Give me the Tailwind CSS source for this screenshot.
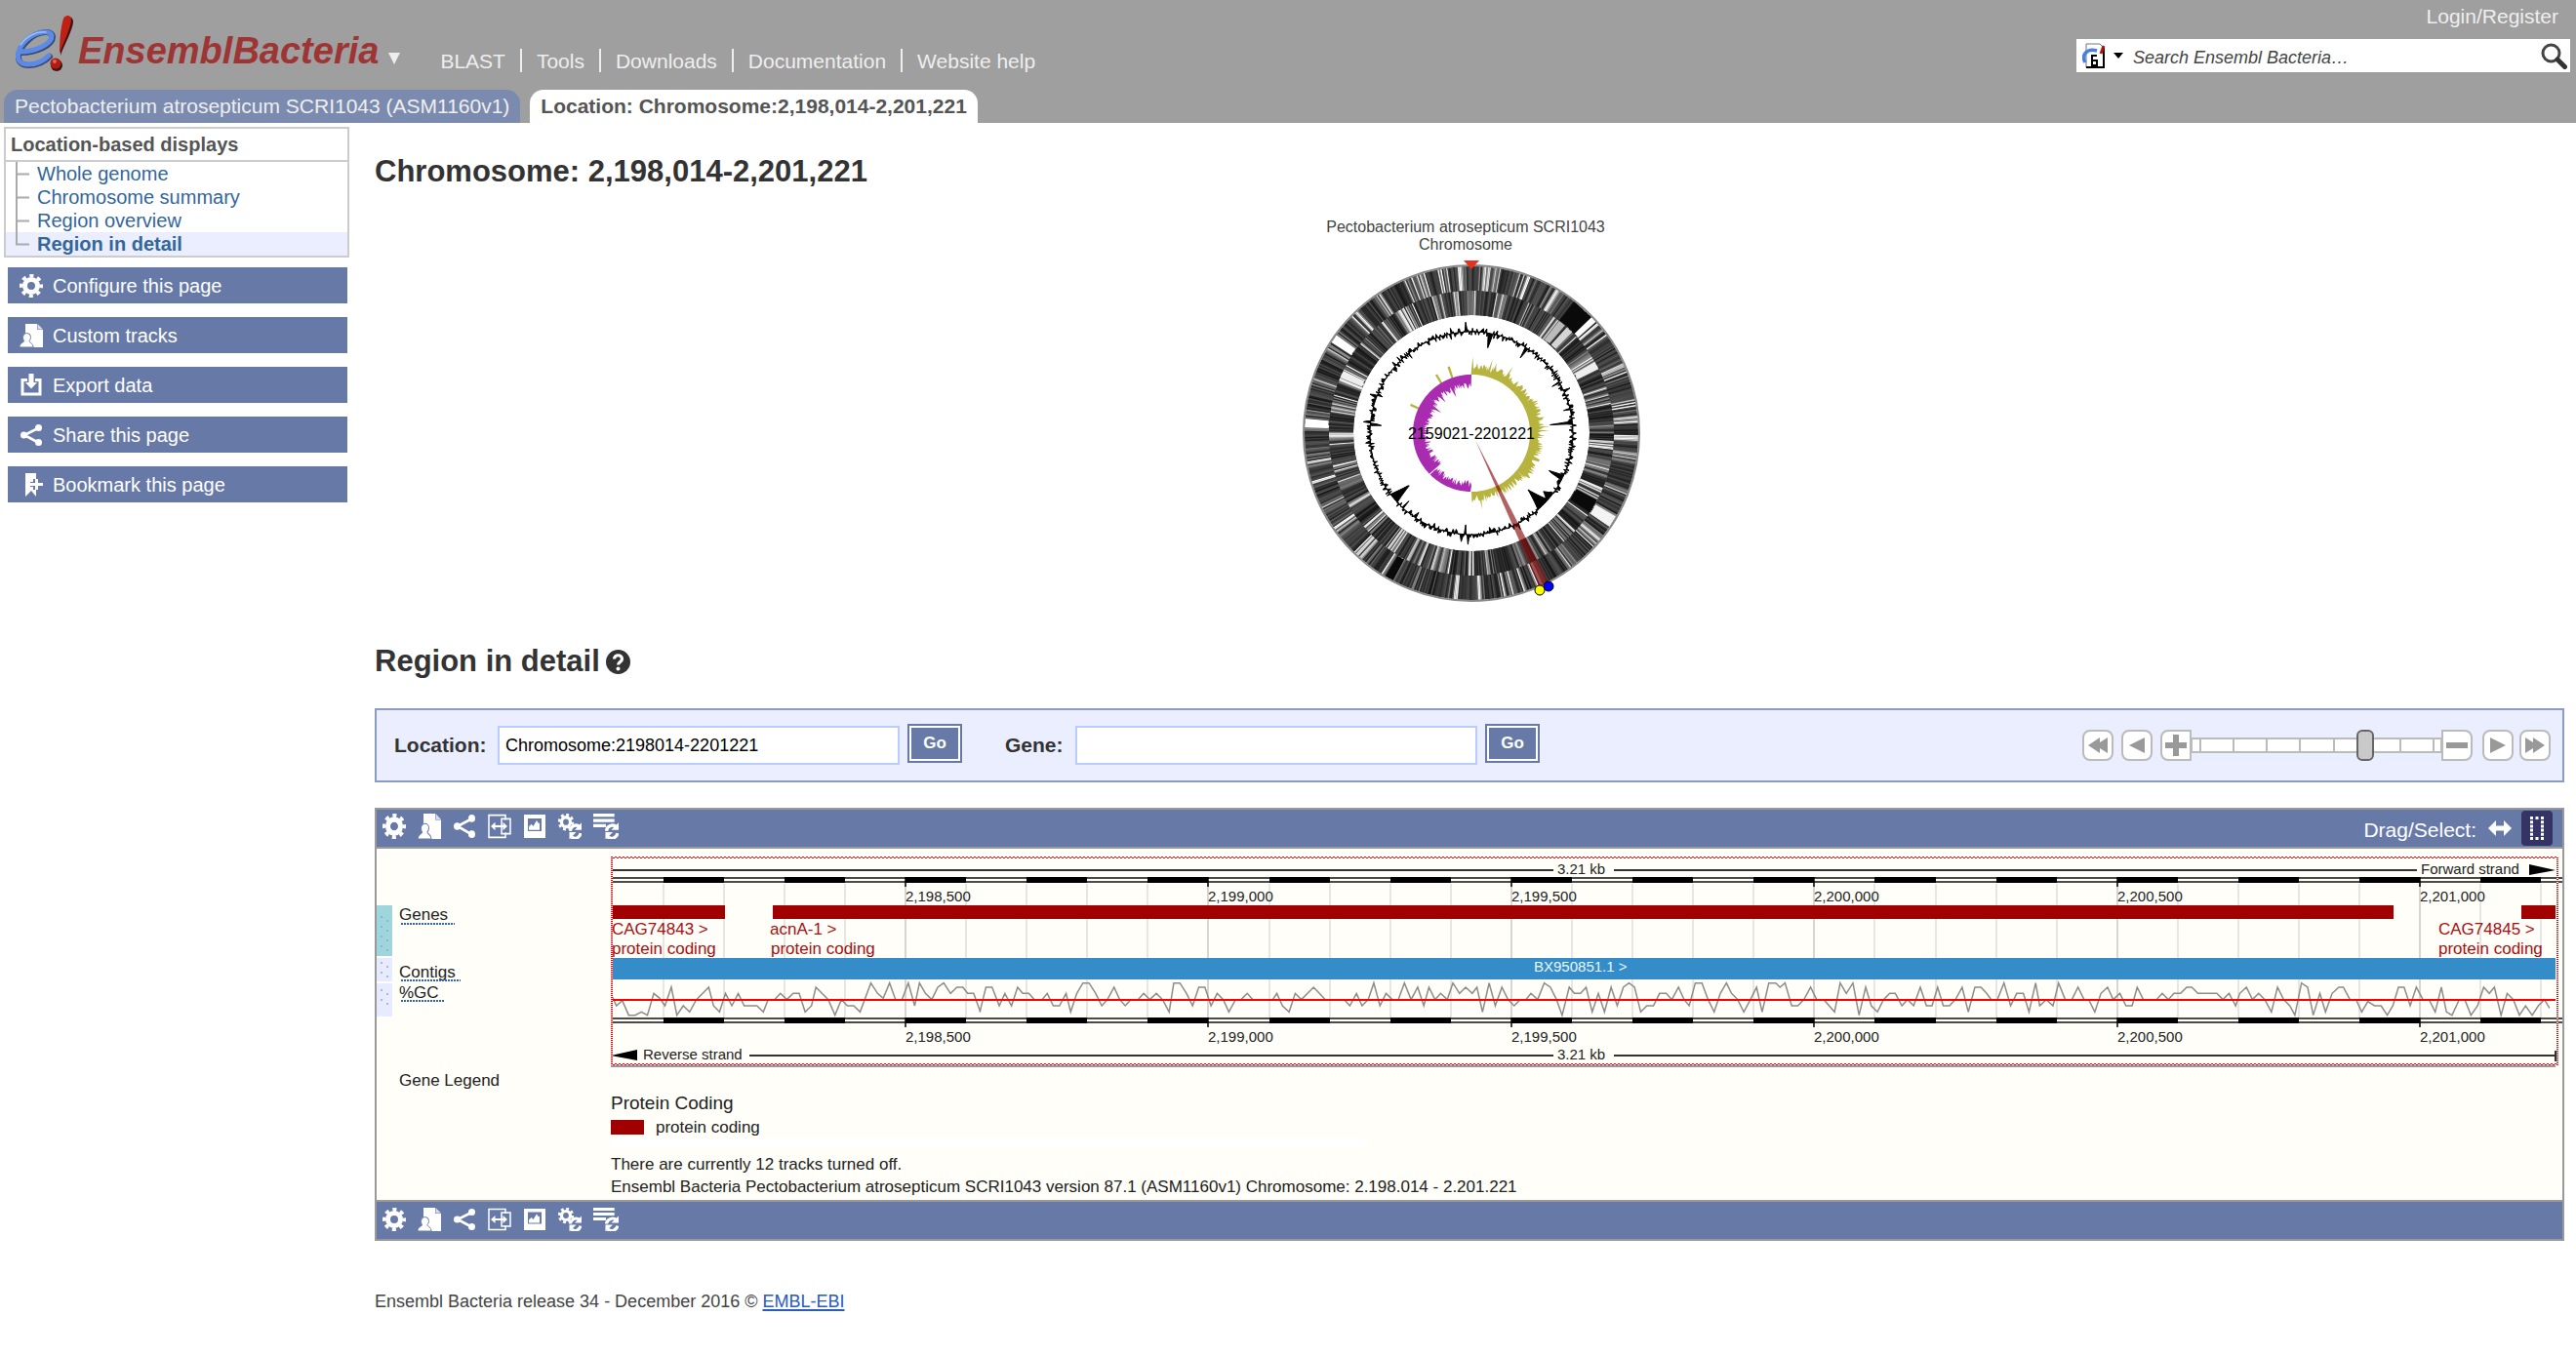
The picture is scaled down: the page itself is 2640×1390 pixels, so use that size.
<!DOCTYPE html>
<html lang="en">
<head>
<meta charset="utf-8">
<title>Ensembl Bacteria: Region in detail</title>
<script src="https://cdn.jsdelivr.net/npm/@tailwindcss/browser@4"></script>
</head>
<body class="bg-white font-['Liberation_Sans',Arial,sans-serif] text-[21px] text-[#333]">

<!-- Shared icon shapes on a 24x24 grid -->
<svg class="hidden" aria-hidden="true">
  <defs>
    <g id="gear" fill="none" stroke="#fff">
      <circle cx="12" cy="12" r="6.5" stroke-width="5"/>
      <circle cx="12" cy="12" r="10.3" stroke-width="3.4" stroke-dasharray="4.1 3.99" stroke-dashoffset="2"/>
    </g>
    <g id="userfile">
      <path d="M6 0h12v6h6v18H6z" fill="#fff"/>
      <path d="M18.5 0 24 5.5h-5.500z" fill="#fff" opacity=".75"/>
      <path d="M7.500 9.500a4 4 0 0 1 4 4c0 2-.7 2.800-1.500 4 0 2 4 2 4 6.500H0c0-5 4.500-4.500 4.500-6.500C4 16.500 3.500 15.500 3.500 13.500a4 4 0 0 1 4-4z" fill="#fff" stroke="#677aa7" stroke-width="1"/>
    </g>
    <g id="share">
      <path d="M19 5 5 12l14 7.500" fill="none" stroke="#fff" stroke-width="2.600"/>
      <circle cx="19.500" cy="4.500" r="3.500" fill="#fff"/><circle cx="4.500" cy="12" r="3.500" fill="#fff"/><circle cx="19.500" cy="19.500" r="3.500" fill="#fff"/>
    </g>
    <g id="resize" fill="none" stroke="#fff" stroke-width="1.500">
      <path d="M18 6V1.500H1v21h17V18"/><path d="M14 5h9v14h-9z"/>
      <path d="M5 12h13" stroke-width="2"/><path d="M3 12l4.500-4v8zM20 12l-4.500-4v8z" fill="#fff" stroke="none"/>
    </g>
    <g id="picture">
      <path d="M1 1h22v22H1zM5 4.500v12h14v-12z" fill="#fff" fill-rule="evenodd"/>
      <path d="M6 15.500v-3l2.500-2.500 2 2L14 6.500l2 3 1-1v7z" fill="#fff"/>
    </g>
    <g id="sync">
      <path d="M12.500 16.500a5.800 5.800 0 0 1 9.500-4M23 18.500a5.800 5.800 0 0 1-9.500 3.500" fill="none" stroke="#fff" stroke-width="3"/>
      <path d="M24 8.500v7h-7zM11.500 24.500v-7h7z" fill="#fff"/>
    </g>
    <g id="gearsync">
      <g fill="none" stroke="#fff">
        <circle cx="8" cy="8" r="4.500" stroke-width="3.200"/>
        <circle cx="8" cy="8" r="6.800" stroke-width="2.800" stroke-dasharray="2.800 2.540"/>
      </g>
      <circle cx="18" cy="17.500" r="7" fill="#677aa7"/>
      <use href="#sync"/>
    </g>
    <g id="listsync">
      <path d="M0 0h20v3H0zM0 5h20v3H0zM0 10h12v3H0z" fill="#fff"/>
      <circle cx="18" cy="17.500" r="7.500" fill="#677aa7"/><use href="#sync"/>
    </g>
    <g id="export">
      <path d="M8 6.500H3V21h18V6.500h-5" fill="none" stroke="#fff" stroke-width="3"/>
      <path d="M9.500 0h5v9h3.500l-6 6.500-6-6.500h3.500z" fill="#fff"/>
    </g>
    <g id="bookmark">
      <path d="M6 0h11v6h-3v3h-3v5h3v3h3v7l-5-6-6 6z" fill="#fff"/>
      <path d="M11 11.500h13M17.500 6v11" stroke="#fff" stroke-width="3" fill="none"/>
    </g>
  </defs>
</svg>

<header class="flex h-[126px] justify-between bg-[#9f9f9f] text-[#eee]">
  <div class="flex flex-col justify-between">
    <div class="flex items-start pl-3">
      <a href="#" class="flex items-start" aria-label="Ensembl Bacteria home">
        <svg class="h-[76px] w-[68px]" viewBox="12 0 68 76" aria-hidden="true">
          <g fill="none" stroke-linecap="round">
            <path d="M21 54C38 54 54 46 54 38 54 31 40 31 29 41 17 52 14 67 30 67 39 67 46 63 51 58" stroke="#3a4a70" stroke-width="6"/>
            <path d="M20 53C37 53 53 45 53 37 53 31 39 31 28 40 16 51 14 66 29 66 38 66 45 62 50 57" stroke="#5b8be6" stroke-width="5"/>
            <path d="M21 46C27 37 37 32 47 33" stroke="#9fc0fb" stroke-width="1.500"/>
          </g>
          <path d="M66 20c2-4 9-4 9 2 0 8-10 26-13 35 0-12 1-28 4-37z" fill="#3d1412"/>
          <path d="M65 19c2-4 8-4 8 1 0 8-9 26-12 35 0-12 1-27 4-36z" fill="#c01f14"/>
          <circle cx="58" cy="67" r="6" fill="#3d1412"/><circle cx="57" cy="65" r="5.500" fill="#b01c13"/><circle cx="56" cy="63" r="2" fill="#e8614f"/>
        </svg>
        <span class="mt-8 text-[38px] leading-10 font-bold text-[#9e3535] italic">EnsemblBacteria</span>
      </a>
      <button type="button" class="mt-[54px] ml-[10px] h-3 w-3" aria-label="More Ensembl sites">
        <svg class="h-3 w-3" viewBox="0 0 12 12"><path d="M0 0h12L6 12z" fill="#eee"/></svg>
      </button>
      <nav class="mt-[50px] ml-[26px]">
        <ul class="flex h-6 leading-[26px]">
          <li class="border-r-2 border-[#eee] px-[15px]"><a href="#">BLAST</a></li>
          <li class="border-r-2 border-[#eee] px-[15px]"><a href="#">Tools</a></li>
          <li class="border-r-2 border-[#eee] px-[15px]"><a href="#">Downloads</a></li>
          <li class="border-r-2 border-[#eee] px-[15px]"><a href="#">Documentation</a></li>
          <li class="px-[15px]"><a href="#">Website help</a></li>
        </ul>
      </nav>
    </div>
    <div class="flex gap-[10px] pl-1 leading-[34px]">
      <a href="#" class="rounded-t-[14px] bg-[#7b8bb0] px-[11px]">Pectobacterium atrosepticum SCRI1043 (ASM1160v1)</a>
      <a href="#" class="rounded-t-[14px] bg-white px-[11px] font-bold text-[#555]">Location: Chromosome:2,198,014-2,201,221</a>
    </div>
  </div>
  <div class="flex flex-col items-end pr-[6px]">
    <a href="#" class="pr-3 leading-[34px]">Login/Register</a>
    <form class="mt-[6px] flex h-[34px] w-[506px] items-center bg-white pr-[3px] pl-[6px]">
      <button type="button" class="flex items-center gap-2" aria-label="Choose search site">
        <svg class="h-[26px] w-6" viewBox="0 0 24 26">
          <path d="M4 1h14l4 4v20H4z" fill="#fff" stroke="#777"/><path d="M22 5v20H4" fill="none" stroke="#000" stroke-width="2"/>
          <path d="M3 20C-1 13 4 5 15 8" fill="none" stroke="#4a80dd" stroke-width="3.500"/><path d="M22 3l-3 8" stroke="#b01515" stroke-width="3"/>
          <path d="M15 13h-5v10h5v-5h-5" fill="none" stroke="#000" stroke-width="2"/>
        </svg>
        <svg class="h-[6px] w-[10px]" viewBox="0 0 10 6"><path d="M0 0h10L5 6z" fill="#000"/></svg>
      </button>
      <input type="search" aria-label="Search Ensembl Bacteria" placeholder="Search Ensembl Bacteria…" class="ml-[10px] min-w-0 flex-1 pt-1 text-[18px] text-[#333] italic outline-none placeholder:text-[#444]">
      <button type="submit" aria-label="Search">
        <svg class="h-[27px] w-[27px]" viewBox="0 0 27 27"><circle cx="10.500" cy="10.500" r="8.500" fill="none" stroke="#444" stroke-width="3"/><path d="M17 17l7.500 7.500" stroke="#333" stroke-width="5" stroke-linecap="round"/></svg>
      </button>
    </form>
  </div>
</header>

<div class="flex">
  <aside class="w-[384px] shrink-0 pt-1 pl-1 text-[20px]">
    <nav class="w-[354px] border-2 border-[#ccc]">
      <h2 class="border-b-2 border-[#ccc] pt-px pl-[5px] leading-[31px] font-bold text-[#555]">Location-based displays</h2>
      <ul class="leading-[25px] text-[#369]">
        <li class="flex h-6"><svg class="mr-2 ml-2 h-6 w-4" viewBox="0 0 16 24"><path d="M3 0v24M3 12.500h13" stroke="#aaa" stroke-width="2" fill="none"/></svg><a href="#">Whole genome</a></li>
        <li class="flex h-6"><svg class="mr-2 ml-2 h-6 w-4" viewBox="0 0 16 24"><path d="M3 0v24M3 12.500h13" stroke="#aaa" stroke-width="2" fill="none"/></svg><a href="#">Chromosome summary</a></li>
        <li class="flex h-6"><svg class="mr-2 ml-2 h-6 w-4" viewBox="0 0 16 24"><path d="M3 0v24M3 12.500h13" stroke="#aaa" stroke-width="2" fill="none"/></svg><a href="#">Region overview</a></li>
        <li class="flex h-6 bg-[#eaeeff] font-bold"><svg class="mr-2 ml-2 h-6 w-4" viewBox="0 0 16 24"><path d="M3 0v12.500h13" stroke="#aaa" stroke-width="2" fill="none"/></svg><a href="#">Region in detail</a></li>
      </ul>
    </nav>
    <div class="mt-[10px] ml-1 flex w-[348px] flex-col gap-[14px] text-white">
      <a href="#" class="flex h-[37px] items-center gap-[10px] bg-[#677aa7] pl-3"><svg class="h-6 w-6" viewBox="0 0 24 24"><use href="#gear"/></svg>Configure this page</a>
      <a href="#" class="flex h-[37px] items-center gap-[10px] bg-[#677aa7] pl-3"><svg class="h-6 w-6" viewBox="0 0 24 24"><use href="#userfile"/></svg>Custom tracks</a>
      <a href="#" class="flex h-[37px] items-center gap-[10px] bg-[#677aa7] pl-3"><svg class="h-6 w-6" viewBox="0 0 24 24"><use href="#export"/></svg>Export data</a>
      <a href="#" class="flex h-[37px] items-center gap-[10px] bg-[#677aa7] pl-3"><svg class="h-6 w-6" viewBox="0 0 24 24"><use href="#share"/></svg>Share this page</a>
      <a href="#" class="flex h-[37px] items-center gap-[10px] bg-[#677aa7] pl-3"><svg class="h-6 w-6" viewBox="0 0 24 24"><use href="#bookmark"/></svg>Bookmark this page</a>
    </div>
  </aside>

  <main class="min-w-0 flex-1 pt-8 pr-3 pb-8">
    <h1 class="text-[31px] leading-9 font-bold">Chromosome: 2,198,014-2,201,221</h1>

    <svg class="mx-auto mt-7 h-[400px] w-[400px]" viewBox="0 0 400 400" role="img" aria-label="Circular chromosome map">
      <g font-size="16" text-anchor="middle" fill="#444">
        <text x="196" y="16">Pectobacterium atrosepticum SCRI1043</text>
        <text x="196" y="34">Chromosome</text>
      </g>
      <g transform="translate(202 222)">
        <g id="rings"></g>
        <circle r="172" fill="none" stroke="#888" stroke-width="2"/>
        <path id="gc" fill="#000" stroke="#000"/>
        <path id="skewPlus" fill="#b6b43e"/>
        <path id="skewMinus" fill="#a92bb0"/>
        <path d="M-8-177H8L0-168z" fill="#e8301f"/>
        <text y="6" font-size="16" text-anchor="middle" fill="#000">2159021-2201221</text>
        <path d="M4 7 70 158 79 153z" fill="#800000" fill-opacity=".62"/>
        <circle cx="79" cy="157" r="5" fill="#00f" stroke="#000"/>
        <circle cx="70" cy="161" r="5" fill="#ff0" stroke="#000"/>
      </g>
    </svg>

    <h2 class="mt-[38px] flex items-center gap-[6px] text-[31px] leading-9 font-bold">Region in detail
      <button type="button" aria-label="Help">
        <svg class="h-[25px] w-[25px]" viewBox="0 0 25 25"><circle cx="12.500" cy="12.500" r="12.500" fill="#333"/><path d="M8.500 9.500c0-5 8-5 8 0 0 3-4 3-4 6" fill="none" stroke="#fff" stroke-width="3.200"/><circle cx="12.500" cy="19.500" r="2" fill="#fff"/></svg>
      </button>
    </h2>

    <div class="mt-[30px] flex h-[76px] items-center justify-between border-2 border-[#8b9cc4] bg-[#eaeeff] pr-3">
      <form class="flex items-center">
        <label for="loc" class="w-[124px] pl-[18px] font-bold">Location:</label>
        <input id="loc" type="text" value="Chromosome:2198014-2201221" class="h-10 w-[412px] border-2 border-[#b8ccff] bg-white px-[6px] text-[18px] text-black">
        <button type="button" class="mb-1 ml-2 h-10 w-14 border-2 border-[#677aa7] bg-[#677aa7] text-[17px] font-bold text-white shadow-[inset_0_0_0_2px_#fff]">Go</button>
        <label for="gene" class="ml-11 w-[72px] font-bold">Gene:</label>
        <input id="gene" type="text" class="h-10 w-[412px] border-2 border-[#b8ccff] bg-white px-[6px] text-[18px] text-black">
        <button type="button" class="mb-1 ml-2 h-10 w-14 border-2 border-[#677aa7] bg-[#677aa7] text-[17px] font-bold text-white shadow-[inset_0_0_0_2px_#fff]">Go</button>
      </form>
      <div class="flex items-center">
        <button type="button" aria-label="Far left" class="mr-2 flex h-8 w-8 items-center justify-center rounded-lg border-2 border-[#bbb] bg-white"><svg class="h-4 w-5" viewBox="0 0 20 16"><path d="M0 8 12 0v5l8-5v16l-8-5v5z" fill="#999"/></svg></button>
        <button type="button" aria-label="Left" class="mr-2 flex h-8 w-8 items-center justify-center rounded-lg border-2 border-[#bbb] bg-white"><svg class="h-4 w-4" viewBox="0 0 16 16"><path d="M0 8 16 0v16z" fill="#999"/></svg></button>
        <button type="button" aria-label="Zoom in" class="flex h-8 w-8 items-center justify-center rounded-l-lg border-2 border-[#bbb] bg-white"><svg class="h-[22px] w-[22px]" viewBox="0 0 22 22"><path d="M0 11h22M11 0v22" stroke="#999" stroke-width="6"/></svg></button>
        <div class="relative h-8 w-64">
          <svg class="absolute inset-0 h-8 w-64" viewBox="0 0 256 32" aria-hidden="true"><path d="M0 9h256v14H0z" fill="#fff" stroke="#bbb" stroke-width="2"/><path d="M9 8v16M43 8v16M77 8v16M111 8v16M146 8v16M180 8v16M214 8v16M248 8v16" stroke="#bbb" stroke-width="2"/></svg>
          <input type="range" min="0" max="100" value="71" aria-label="Zoom level" class="absolute inset-0 h-8 w-64 appearance-none bg-transparent [&::-webkit-slider-thumb]:h-8 [&::-webkit-slider-thumb]:w-[18px] [&::-webkit-slider-thumb]:appearance-none [&::-webkit-slider-thumb]:rounded-[6px] [&::-webkit-slider-thumb]:border-2 [&::-webkit-slider-thumb]:border-[#666] [&::-webkit-slider-thumb]:bg-[#c9c9c9]">
        </div>
        <button type="button" aria-label="Zoom out" class="flex h-8 w-8 items-center justify-center rounded-r-lg border-2 border-[#bbb] bg-white"><svg class="h-[22px] w-[22px]" viewBox="0 0 22 22"><path d="M0 11h22" stroke="#999" stroke-width="6"/></svg></button>
        <button type="button" aria-label="Right" class="ml-[10px] flex h-8 w-8 items-center justify-center rounded-lg border-2 border-[#bbb] bg-white"><svg class="h-4 w-4" viewBox="0 0 16 16"><path d="M16 8 0 0v16z" fill="#999"/></svg></button>
        <button type="button" aria-label="Far right" class="ml-[6px] flex h-8 w-8 items-center justify-center rounded-lg border-2 border-[#bbb] bg-white"><svg class="h-4 w-5" viewBox="0 0 20 16"><path d="M20 8 8 0v5L0 0v16l8-5v5z" fill="#999"/></svg></button>
      </div>
    </div>

    <section class="mt-[26px] border-2 border-[#999] bg-[#fffef8]">
      <div class="flex h-10 justify-between border-b-2 border-[#999] bg-[#677aa7] pr-[10px] pl-[6px] text-white">
        <div class="flex gap-3 pt-1">
          <button type="button" class="h-[26px] w-6" aria-label="Configure this image"><svg class="h-[26px] w-6" viewBox="0 0 24 24" preserveAspectRatio="none"><use href="#gear"/></svg></button>
          <button type="button" class="h-[26px] w-6" aria-label="Custom tracks"><svg class="h-[26px] w-6" viewBox="0 0 24 24" preserveAspectRatio="none"><use href="#userfile"/></svg></button>
          <button type="button" class="h-[26px] w-6" aria-label="Share"><svg class="h-[26px] w-6" viewBox="0 0 24 24" preserveAspectRatio="none"><use href="#share"/></svg></button>
          <button type="button" class="h-[26px] w-6" aria-label="Resize"><svg class="h-[26px] w-6" viewBox="0 0 24 24" preserveAspectRatio="none"><use href="#resize"/></svg></button>
          <button type="button" class="h-[26px] w-6" aria-label="Export image"><svg class="h-[26px] w-6" viewBox="0 0 24 24" preserveAspectRatio="none"><use href="#picture"/></svg></button>
          <button type="button" class="h-[26px] w-6" aria-label="Reset configuration"><svg class="h-[26px] w-6" viewBox="0 0 24 24" preserveAspectRatio="none"><use href="#gearsync"/></svg></button>
          <button type="button" class="h-[26px] w-[26px]" aria-label="Reset track order"><svg class="h-[26px] w-[26px]" viewBox="0 0 24 24" preserveAspectRatio="none"><use href="#listsync"/></svg></button>
        </div>
        <div class="flex items-center">
          <span class="pt-1">Drag/Select:</span>
          <button type="button" class="ml-3" aria-label="Drag to scroll"><svg class="h-4 w-6" viewBox="0 0 24 16"><path d="M0 8l8-8v5.500h8V0l8 8-8 8v-5.500H8V16z" fill="#fff"/></svg></button>
          <button type="button" class="ml-[10px] flex h-9 w-8 items-center justify-center rounded bg-[#336]" aria-label="Drag to select"><svg class="h-6 w-[14px]" viewBox="0 0 14 24"><path d="M1.500 0v24M12.500 0v24M5.500 1.500h3M5.500 22.500h3" fill="none" stroke="#fff" stroke-width="3" stroke-dasharray="3 1.200"/></svg></button>
        </div>
      </div>

      <!-- Region view: 62px per 100 bases, 2,198,500 at x=542 -->
      <svg class="block h-auto w-full" viewBox="0 0 2240 360" role="img" aria-label="Genes in Chromosome 2,198,014-2,201,221">
        <defs>
          <pattern id="checker" width="4" height="4" patternUnits="userSpaceOnUse">
            <path d="M0 0h4v4H0z" fill="#fff"/><path d="M0 0h2v1H0zM2 1h2v1H2zM0 2h2v1H0zM2 3h2v1H2z" fill="#f00"/>
          </pattern>
        </defs>
        <g fill="#9fd5dd"><rect y="58" width="16" height="52"/></g>
        <g fill="#e8ebff"><rect y="112" width="16" height="24"/><rect y="138" width="16" height="34"/></g>
        <path d="M5 69v32M11 73v32M5 116v16M11 120v14M5 144v18M11 148v18" stroke="#8fa5b8" stroke-opacity=".7" stroke-width="2" stroke-dasharray="2 8"/>
        <g font-size="17" fill="#222">
          <text x="23" y="73">Genes</text><text x="23" y="132">Contigs</text><text x="23" y="153">%GC</text><text x="23" y="243">Gene Legend</text>
        </g>
        <path d="M25 77h55M25 135h61M25 156h45" stroke="#36a" stroke-width="2" stroke-dasharray="2 1"/>

        <g id="grid"></g>
        <rect x="240" y="297" width="775" height="9" fill="#fff"/>

        <g fill="#a00000">
          <rect x="240" y="58" width="117" height="14"/><rect x="406" y="58" width="1661" height="14"/><rect x="2198" y="58" width="35" height="14"/>
          <rect x="240" y="278" width="34" height="15"/>
        </g>
        <g font-size="17" fill="#a80f0f">
          <text x="241" y="88">CAG74843 &gt;</text><text x="241" y="108">protein coding</text>
          <text x="403" y="88">acnA-1 &gt;</text><text x="404" y="108">protein coding</text>
          <text x="2113" y="88">CAG74845 &gt;</text><text x="2113" y="108">protein coding</text>
        </g>
        <rect x="240" y="112" width="1993" height="22" fill="#348dc8"/>
        <text x="1186" y="126" font-size="15" fill="#e8f4fc">BX950851.1 &gt;</text>

        <g fill="none" stroke="#8c8c8c" stroke-width="1.500">
          <polyline vector-effect="non-scaling-stroke" transform="translate(-16 -10) scale(.4082 .3333)" points="632,487 641,513 656,497 672,542 688,542 704,532 719,542 735,475 750,490 763,513 779,456 793,542 809,513 825,532 842,494 873,456 885,513 900,532 915,475 931,513 947,475 962,513 994,513 1010,532 1022,494 1038,494 1053,475 1069,494 1085,475 1100,475 1115,532 1131,513 1142,456 1173,494 1190,542 1206,494 1221,513 1237,513 1253,532 1280,443 1297,475 1311,490 1327,443 1342,494 1358,494 1374,443 1390,513 1402,443 1417,475 1433,494 1448,456 1463,443 1480,475 1496,456 1511,456 1523,475 1538,475 1555,532"/>
          <polyline vector-effect="non-scaling-stroke" transform="translate(614 -10) scale(.523 .3333)" points="8,532 20,456 32,456 46,513 57,475 70,513 82,456 92,475 104,475 115,494 130,494 140,475 152,513 164,513 177,475 186,532 198,475 210,443 222,443 235,475 247,513 258,494 271,456 282,494 293,513 304,494 318,494 329,475 341,494 354,475 366,494 379,532 388,443 400,443 413,475 425,513 437,456 449,456 461,513 473,475 485,494 496,532 509,494 520,494 532,475 543,494 582,494 590,475 601,513 614,532 626,475 638,494 662,456 685,494 722,494 733,513 746,475 757,513 769,494 780,443 792,513 804,475 816,494 828,494 840,443 853,494 866,456 878,513 888,456 900,494 911,475 924,494 935,443 948,475 960,456 973,475 982,456 993,532 1006,443 1018,513 1031,456 1043,494 1055,513 1067,494 1078,494 1088,475 1101,494 1114,443 1126,456 1138,494 1149,542 1163,456 1173,475 1185,475 1196,456 1208,532 1220,475 1232,532 1245,456 1257,513 1269,456 1280,443 1291,456 1303,532 1315,513 1328,513 1340,475 1353,475 1364,494 1377,456 1388,494 1398,513 1410,443 1423,443 1435,494 1447,532 1459,475 1471,443 1481,475 1493,494 1505,532 1518,494 1530,456 1541,532 1554,443 1568,443"/>
          <polyline vector-effect="non-scaling-stroke" transform="translate(1434 -10) scale(.523 .3333)" points="0,443 8,456 18,443 31,513 43,513 55,494 68,456 80,494 94,494 115,532 126,443 138,475 151,443 163,542 176,456 187,513 199,532 211,494 223,475 234,475 247,513 258,494 270,513 283,456 295,513 306,513 317,456 328,513 340,513 352,494 365,456 377,532 390,456 402,456 413,475 422,494 434,494 447,443 460,513 472,475 485,475 496,532 509,443 517,513 530,494 543,513 554,443 567,494 580,494 592,456 604,494 613,494 625,532 637,475 650,456 661,494 674,475 686,513 698,513 708,456 720,494 746,494 757,475 769,494 780,475 793,475 805,456 815,456 827,475 864,475 876,494 888,475 901,513 909,475 922,456 934,494 946,475 958,494 971,532 983,456 995,494 1007,513 1017,542 1030,443 1042,456 1053,542 1066,475 1077,532 1090,475 1103,456 1112,456 1125,494 1137,494 1148,532 1160,500 1173,513 1186,513 1198,542 1209,513 1220,456 1231,456 1243,513 1255,456 1268,494 1280,494 1292,532 1304,456 1314,532 1325,542 1339,494 1350,494 1362,542 1375,513 1387,456 1398,475 1408,456 1421,542 1433,475 1445,494 1457,542 1469,513 1482,542 1494,513 1506,494 1516,520"/>
        </g>
        <path d="M240 155h1993" stroke="#f00" stroke-width="2"/>

        <g stroke="#333" stroke-width="2">
          <path d="M240 22h966M1268 22h823M241 16v13"/>
          <path d="M382 212h824M1268 212h965M2233 207v11"/>
        </g>
        <path d="M2206 16l27 6-27 5zM267 206l-27 6 27 5z" fill="#000"/>
        <g font-size="15" fill="#222">
          <text x="1210" y="26">3.21 kb</text><text x="2095" y="26">Forward strand</text>
          <text x="1210" y="216">3.21 kb</text><text x="273" y="216">Reverse strand</text>
        </g>
        <g fill="url(#checker)">
          <rect x="240" y="8" width="1995" height="2"/><rect x="240" y="220" width="1995" height="2"/>
          <rect x="240" y="8" width="2" height="214"/><rect x="2234" y="8" width="2" height="214"/>
        </g>
        <rect x="240" y="222" width="1993" height="2" fill="#999"/>

        <g fill="#222">
          <text x="240" y="267" font-size="19">Protein Coding</text>
          <g font-size="17">
            <text x="286" y="291">protein coding</text>
            <text x="240" y="329">There are currently 12 tracks turned off.</text>
            <text x="240" y="352">Ensembl Bacteria Pectobacterium atrosepticum SCRI1043 version 87.1 (ASM1160v1) Chromosome: 2.198.014 - 2.201.221</text>
          </g>
        </g>
      </svg>

      <div class="flex h-10 gap-3 border-t-2 border-[#999] bg-[#677aa7] pt-[6px] pl-[6px]">
        <button type="button" class="h-6 w-6" aria-label="Configure this image"><svg class="h-6 w-6" viewBox="0 0 24 24"><use href="#gear"/></svg></button>
        <button type="button" class="h-6 w-6" aria-label="Custom tracks"><svg class="h-6 w-6" viewBox="0 0 24 24"><use href="#userfile"/></svg></button>
        <button type="button" class="h-6 w-6" aria-label="Share"><svg class="h-6 w-6" viewBox="0 0 24 24"><use href="#share"/></svg></button>
        <button type="button" class="h-6 w-6" aria-label="Resize"><svg class="h-6 w-6" viewBox="0 0 24 24"><use href="#resize"/></svg></button>
        <button type="button" class="h-6 w-6" aria-label="Export image"><svg class="h-6 w-6" viewBox="0 0 24 24"><use href="#picture"/></svg></button>
        <button type="button" class="h-6 w-6" aria-label="Reset configuration"><svg class="h-6 w-6" viewBox="0 0 24 24"><use href="#gearsync"/></svg></button>
        <button type="button" class="h-6 w-[26px]" aria-label="Reset track order"><svg class="h-6 w-[26px]" viewBox="0 0 24 24" preserveAspectRatio="none"><use href="#listsync"/></svg></button>
      </div>
    </section>

    <footer class="mt-[50px] text-[18px] leading-6 text-[#444]">Ensembl Bacteria release 34 - December 2016 © <a href="#" class="text-[#2a5bc0] underline decoration-2 underline-offset-2">EMBL-EBI</a></footer>
  </main>
</div>

<script>
// Repeatable noise for the chromosome map
let seed = 7;
const rnd = () => (seed = (seed * 16807) % 2147483647) / 2147483647;
const pt = (deg, r) => {
  const a = deg * Math.PI / 180;
  return (Math.sin(a) * r).toFixed(1) + ' ' + (-Math.cos(a) * r).toFixed(1);
};

// Forward and reverse gene rings
let lines = '<circle r="146" fill="none" stroke="#333" stroke-width="50"/>';
let d = 0, outerDark = true;
while (d < 360) {
  const end = Math.min(360, d + 2 + rnd() * 7);
  for (; d < end; d += 0.5) {
    for (const [r1, r2, dark] of [[146, 171, outerDark], [121, 146, !outerDark]]) {
      const n = rnd();
      const v = Math.round(dark ? 20 + n * 65 : (n > 0.75 ? 190 + rnd() * 65 : 30 + n * 160));
      lines += `<path d="M${pt(d, r1)}L${pt(d, r2)}" stroke="rgb(${v},${v},${v})" stroke-width="1.6"/>`;
    }
  }
  outerDark = !outerDark;
}
const wedge = (a, b, r1, r2, fill) => `<path d="M${pt(a, r1)}L${pt(a, r2)}L${pt(b, r2)}L${pt(b, r1)}z" fill="${fill}"/>`;
lines += wedge(38, 46, 147, 171, '#0a0a0a') + wedge(46, 48, 147, 171, '#fff') + wedge(38, 41, 122, 146, '#bbb') + wedge(42, 45, 122, 146, '#d5d5d5')
       + wedge(60, 63, 122, 146, '#eee') + wedge(120, 124, 147, 171, '#f4f4f4') + wedge(118, 124, 122, 146, '#0a0a0a')
       + wedge(208, 211, 147, 171, '#0a0a0a') + wedge(272, 275, 147, 171, '#fff') + wedge(303, 306, 147, 171, '#fff')
       + wedge(293, 296, 122, 146, '#eee');
document.getElementById('rings').innerHTML = lines;

// GC content: [angle, radius, half width] of the marked dips
const dips = [[11, 84, 0.8], [33, 92, 1], [84, 81, 0.8], [116, 86, 1.6], [135, 82, 4], [129, 95, 3], [230, 82, 3], [275, 89, 0.8]];
let gc = '';
for (let a = 0; a <= 360; a += 0.6) {
  let r = 104 + (rnd() - 0.5) * 8 + (rnd() > 0.88 ? (rnd() - 0.5) * 15 : 0);
  for (const [c, low, w] of dips) {
    const k = Math.abs(a - c) / w;
    if (k < 1) r = Math.min(r, low + (104 - low) * k);
  }
  gc += (gc ? 'L' : 'M') + pt(a, r);
}
for (let a = 360; a >= 0; a -= 2) gc += 'L' + pt(a, 104);
const gcPath = document.getElementById('gc');
gcPath.setAttribute('d', gc + 'z');
gcPath.setAttribute('stroke-width', '1');

// GC skew: outward on the right half, inward on the left half
const skew = (from, to, mean, spread) => {
  let s = '';
  for (let a = from; a <= to; a += 0.8) s += (s ? 'L' : 'M') + pt(a, mean + (rnd() - 0.5) * spread);
  for (let a = to; a >= from; a -= 2) s += 'L' + pt(a, 60);
  return s + 'z';
};
let plus = skew(0, 60, 69, 8) + skew(60, 130, 72, 9) + skew(130, 180, 68, 9);
for (const [a, r] of [[1, 78], [16, 79], [20, 77], [32, 81], [85, 81], [88, 80], [172, 79]]) plus += `M${pt(a - 1.5, 60)}L${pt(a, r)}L${pt(a + 1.5, 60)}z`;
for (const [a, r] of [[295, 69], [329, 70], [341, 72]]) plus += `M${pt(a - 1, 59)}L${pt(a - 1, r)}L${pt(a + 1, r)}L${pt(a + 1, 59)}z`;
document.getElementById('skewPlus').setAttribute('d', plus);
let minus = skew(180, 225, 52, 8) + skew(225, 310, 46, 7) + skew(310, 360, 49, 7);
for (const [a, r] of [[304, 37], [320, 41], [337, 40]]) minus += `M${pt(a - 3, 60)}L${pt(a, r)}L${pt(a + 3, 60)}z`;
document.getElementById('skewMinus').setAttribute('d', minus);

// Scale bars, grid lines and position labels
const xOf = base => Math.round(542 + (base - 2198500) * 0.6209);
let g = '';
for (let b = 2198100; b <= 2201200; b += 100)
  g += `<path d="M${xOf(b)} 36v137" stroke="${b % 500 ? '#e6e6e4' : '#c8c8c8'}" stroke-width="${b % 500 ? 2 : 1.5}"/>`;
for (const y of [29, 173]) {
  g += `<path d="M240 ${y + 1}h2000M240 ${y + 5}h2000" stroke="#111" stroke-width="1.5"/>`;
  for (let b = 2198100; b <= 2201100; b += 200)
    g += `<rect x="${xOf(b)}" y="${y}" width="${xOf(b + 100) - xOf(b)}" height="6" fill="#000"/>`;
  for (let b = 2198500; b <= 2201000; b += 500)
    g += `<path d="M${xOf(b)} ${y}v10" stroke="#000" stroke-width="1.5"/><text x="${xOf(b)}" y="${y === 29 ? 54 : 198}" font-size="15" fill="#222">${b.toLocaleString('en-US')}</text>`;
}
document.getElementById('grid').innerHTML = g;
</script>
</body>
</html>
